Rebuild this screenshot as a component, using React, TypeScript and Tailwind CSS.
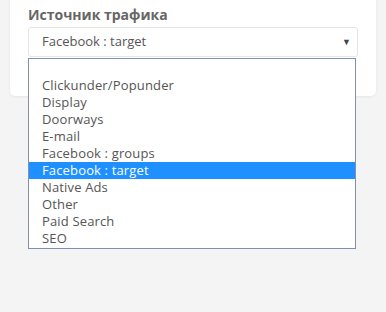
const OPTIONS = [
  "",
  "Clickunder/Popunder",
  "Display",
  "Doorways",
  "E-mail",
  "Facebook : groups",
  "Facebook : target",
  "Native Ads",
  "Other",
  "Paid Search",
  "SEO",
];

const SELECTED = "Facebook : target";

export default function App() {
  return (
    <div
      className="relative h-[312px] w-[386px] overflow-hidden bg-[#f4f4f5]"
      style={{ fontFamily: '"Open Sans", "Liberation Sans", sans-serif' }}
    >
      <div className="mx-[10px] -mt-2 h-[104px] rounded-[5px] bg-white px-[18px] pt-[14px] shadow-[0_1px_3px_rgba(0,0,0,0.06)]">
        <label className="block text-[14px] font-bold leading-[18px] text-[#666]">
          Источник трафика
        </label>
        <div className="relative mt-[3px] flex h-[30px] items-center rounded-[3px] border border-[#e6e6e6] bg-white pl-[13px] text-[13px] text-[#555]">
          Facebook : target
          <span className="absolute right-[6px] top-[9px] text-[9px] leading-none text-[#444]">
            ▼
          </span>
        </div>
      </div>

      <div className="absolute left-[28px] top-[58px] w-[328px] border border-[#8090b5] bg-white py-[1px]">
        {OPTIONS.map((opt, i) => (
          <div
            key={i}
            className={`h-[17px] pl-[13px] text-[13px] leading-[16px] tracking-[0.15px] ${
              opt === SELECTED ? "bg-[#1e90ff] text-white" : "text-[#555]"
            }`}
          >
            {opt}
          </div>
        ))}
      </div>
    </div>
  );
}
